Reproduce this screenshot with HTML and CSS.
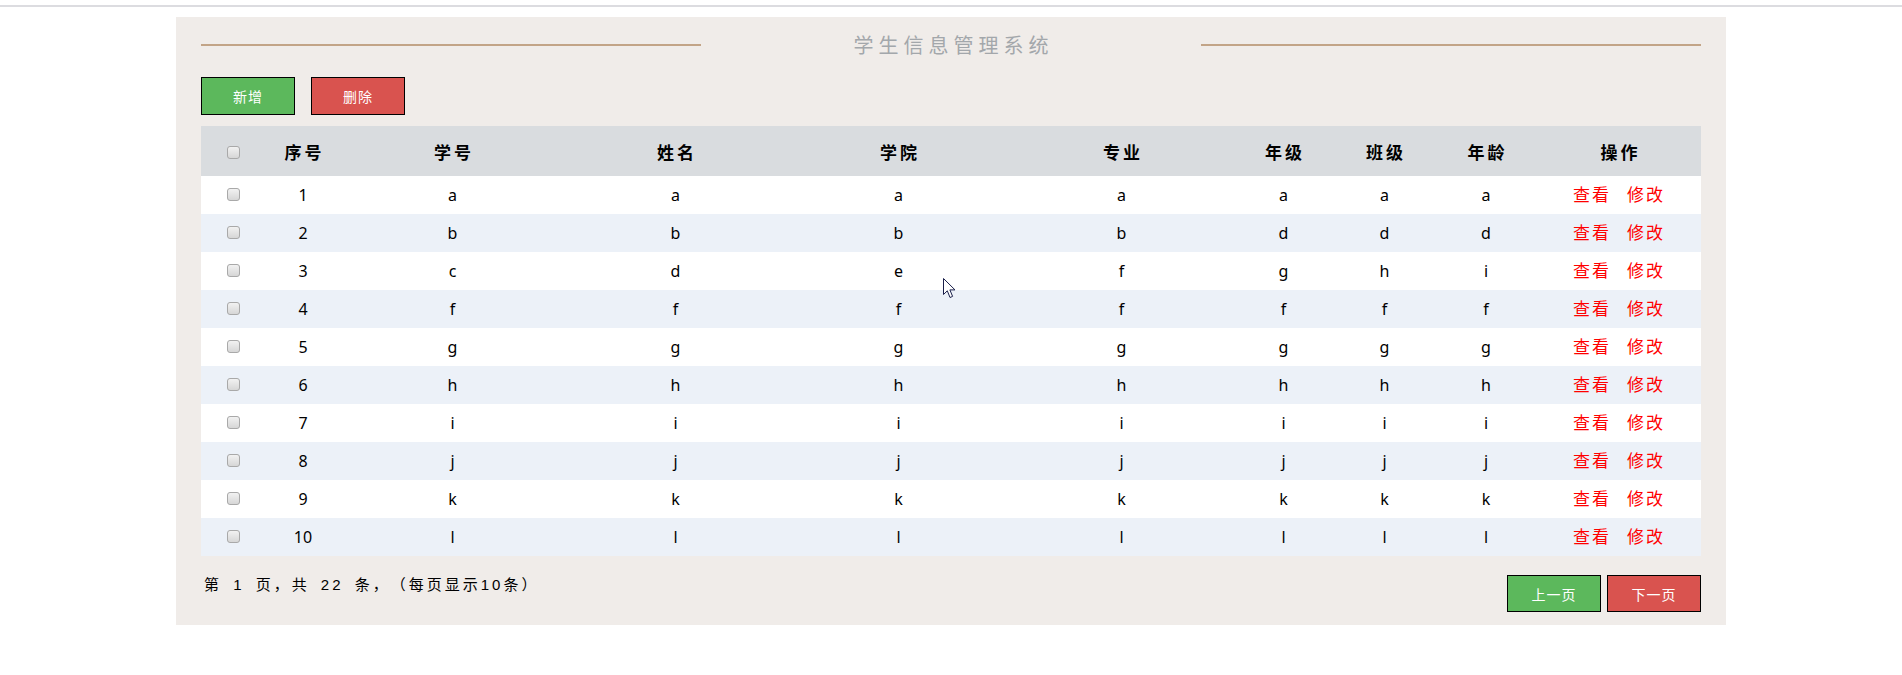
FILE: index.html
```html
<!DOCTYPE html>
<html lang="zh-CN">
<head>
<meta charset="utf-8">
<title>学生信息管理系统</title>
<link rel="stylesheet" href="styles.css">
</head>
<body>
<div class="topline"></div>
<div class="panel">
  <div class="title-row">
    <span class="rule"></span>
    <h1 class="title">学生信息管理系统</h1>
    <span class="rule"></span>
  </div>
  <div class="toolbar">
    <button class="btn btn-green">新增</button>
    <button class="btn btn-red">删除</button>
  </div>
  <table class="grid">
    <colgroup>
      <col class="c-cb"><col class="c-no"><col class="c-wide"><col class="c-wide"><col class="c-wide"><col class="c-wide"><col class="c-mid"><col class="c-mid"><col class="c-mid2"><col class="c-op">
    </colgroup>
    <thead>
      <tr><th><input type="checkbox" class="cb"></th><th>序号</th><th>学号</th><th>姓名</th><th>学院</th><th>专业</th><th>年级</th><th>班级</th><th>年龄</th><th>操作</th></tr>
    </thead>
    <tbody>
      <tr><td><input type="checkbox" class="cb"></td><td>1</td><td>a</td><td>a</td><td>a</td><td>a</td><td>a</td><td>a</td><td>a</td><td class="ops"><a>查看</a><a>修改</a></td></tr>
      <tr><td><input type="checkbox" class="cb"></td><td>2</td><td>b</td><td>b</td><td>b</td><td>b</td><td>d</td><td>d</td><td>d</td><td class="ops"><a>查看</a><a>修改</a></td></tr>
      <tr><td><input type="checkbox" class="cb"></td><td>3</td><td>c</td><td>d</td><td>e</td><td>f</td><td>g</td><td>h</td><td>i</td><td class="ops"><a>查看</a><a>修改</a></td></tr>
      <tr><td><input type="checkbox" class="cb"></td><td>4</td><td>f</td><td>f</td><td>f</td><td>f</td><td>f</td><td>f</td><td>f</td><td class="ops"><a>查看</a><a>修改</a></td></tr>
      <tr><td><input type="checkbox" class="cb"></td><td>5</td><td>g</td><td>g</td><td>g</td><td>g</td><td>g</td><td>g</td><td>g</td><td class="ops"><a>查看</a><a>修改</a></td></tr>
      <tr><td><input type="checkbox" class="cb"></td><td>6</td><td>h</td><td>h</td><td>h</td><td>h</td><td>h</td><td>h</td><td>h</td><td class="ops"><a>查看</a><a>修改</a></td></tr>
      <tr><td><input type="checkbox" class="cb"></td><td>7</td><td>i</td><td>i</td><td>i</td><td>i</td><td>i</td><td>i</td><td>i</td><td class="ops"><a>查看</a><a>修改</a></td></tr>
      <tr><td><input type="checkbox" class="cb"></td><td>8</td><td>j</td><td>j</td><td>j</td><td>j</td><td>j</td><td>j</td><td>j</td><td class="ops"><a>查看</a><a>修改</a></td></tr>
      <tr><td><input type="checkbox" class="cb"></td><td>9</td><td>k</td><td>k</td><td>k</td><td>k</td><td>k</td><td>k</td><td>k</td><td class="ops"><a>查看</a><a>修改</a></td></tr>
      <tr><td><input type="checkbox" class="cb"></td><td>10</td><td>l</td><td>l</td><td>l</td><td>l</td><td>l</td><td>l</td><td>l</td><td class="ops"><a>查看</a><a>修改</a></td></tr>
    </tbody>
  </table>
  <div class="footer">
    <p class="pageinfo">第 1 页，共 22 条，（每页显示10条）</p>
    <div class="pager">
      <button class="btn btn-green btn-page">上一页</button>
      <button class="btn btn-red btn-page">下一页</button>
    </div>
  </div>
</div>
<svg class="cursor" width="13" height="21" viewBox="0 0 13 21" aria-hidden="true">
  <path d="M0.5 0.5 L0.5 16.5 L4.3 12.8 L7 19.5 L9.6 18.4 L6.9 11.9 L12 11.9 Z" fill="#ffffff" stroke="#1a1f4a" stroke-width="1" stroke-linejoin="round"/>
</svg>
</body>
</html>
```

FILE: styles.css
```css
html, body {
  margin: 0;
  padding: 0;
  background: #ffffff;
}
body {
  position: relative;
  font-family: "Noto Sans", "Noto Sans CJK SC", sans-serif;
  color: #000;
  text-spacing-trim: space-all;
}
.topline {
  height: 2px;
  margin-top: 5px;
  background: #dcdce0;
}
.panel {
  width: 1500px;
  margin: 10px auto 0;
  padding: 0 25px 13px;
  background: #f0ece9;
}
.title-row {
  height: 55px;
  display: flex;
  align-items: center;
  justify-content: space-between;
}
.rule {
  width: 500px;
  height: 2px;
  margin-top: 1px;
  background: #c2a487;
}
.title {
  margin: 0;
  font-family: "Noto Sans CJK SC", sans-serif;
  font-weight: 400;
  font-size: 20px;
  letter-spacing: 5px;
  padding-left: 5px;
  color: #a3a7ab;
  line-height: 24px;
}
.toolbar {
  display: flex;
  gap: 16px;
  margin-top: 5px;
}
.btn {
  box-sizing: border-box;
  width: 94px;
  height: 38px;
  border: 1px solid #000;
  color: #ffffff;
  font-family: "Noto Sans CJK SC", sans-serif;
  font-size: 14px;
  letter-spacing: 1px;
  padding: 0;
  cursor: pointer;
}
.btn-green { background: #5cb85c; }
.btn-red { background: #d9534f; }
.btn-page { height: 37px; }
.grid {
  width: 1500px;
  margin-top: 11px;
  border-collapse: collapse;
  table-layout: fixed;
}
.c-cb { width: 64px; }
.c-no { width: 76px; }
.c-wide { width: 223px; }
.c-mid { width: 101px; }
.c-mid2 { width: 102px; }
.c-op { width: 164px; }
.grid thead tr {
  height: 50px;
  background: #d9dcdf;
}
.grid th {
  font-family: "Noto Sans CJK SC", sans-serif;
  font-weight: 700;
  font-size: 17px;
  letter-spacing: 3px;
  text-indent: 3px;
  text-align: center;
  padding: 0;
}
.grid th:first-child { letter-spacing: 0; text-indent: 0; }
.grid tbody tr {
  height: 38px;
  background: #ffffff;
}
.grid tbody tr:nth-child(even) { background: #ecf1f8; }
.grid td {
  text-align: center;
  padding: 0 0 1px;
  font-size: 16px;
  line-height: 20px;
}
.cb {
  appearance: none;
  -webkit-appearance: none;
  box-sizing: border-box;
  width: 13px;
  height: 13px;
  margin: 0 0 3px;
  vertical-align: middle;
  border: 1px solid #a9a9a9;
  border-radius: 3px;
  background: linear-gradient(#f2f2f2, #d6d6d6);
}
.ops a {
  color: #ff0000;
  font-family: "Noto Sans CJK SC", sans-serif;
  font-size: 17px;
  letter-spacing: 2px;
  cursor: pointer;
}
.ops a + a { margin-left: 16px; }
.footer {
  display: flex;
  justify-content: space-between;
  align-items: flex-start;
  margin-top: 19px;
}
.pageinfo {
  margin: 0;
  padding-left: 3px;
  font-family: "Liberation Sans", "Noto Sans CJK SC", sans-serif;
  font-size: 15px;
  letter-spacing: 3px;
  word-spacing: 4px;
  line-height: 20px;
}
.pager {
  display: flex;
  gap: 6px;
}
.cursor {
  position: absolute;
  left: 943px;
  top: 278px;
}
```
